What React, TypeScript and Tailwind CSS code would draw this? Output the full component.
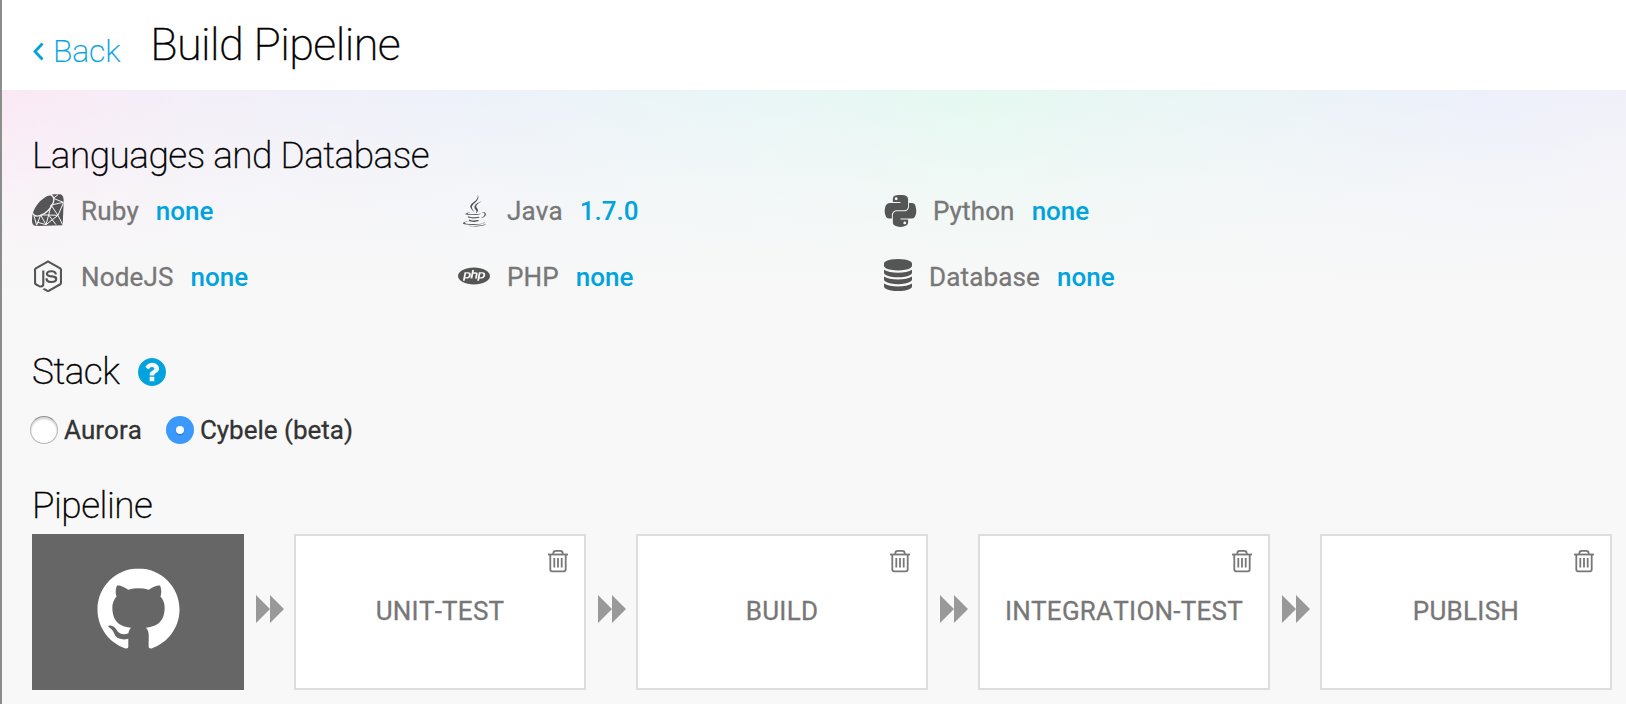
import type { ReactNode } from 'react';
import { DiJava, DiPython, DiNodejsSmall, DiGithubBadge } from 'react-icons/di';
import { SiPhp } from 'react-icons/si';

function RubyIcon() {
  return (
    <svg width="32" height="32" viewBox="0 0 96 96">
      <path fill="#555555" d="M1 62Q6 42 24 22Q44 3 66 1L86 1Q96 5 95 24L92 94L12 96Q0 94 0 80Z" />
      <g fill="none" stroke="#f5f3f6" strokeWidth="3" strokeLinejoin="round">
        <ellipse cx="33" cy="34" rx="40" ry="22" transform="rotate(-45 33 34)" strokeWidth="4" />
        <path d="M64 13L94 25L57 33M64 13L78 2" />
        <path d="M57 33L50 63L26 63L14 94L6 66" />
        <path d="M57 33L78 64L94 27M78 64L50 63L42 92L26 63M78 64L42 92M78 64L92 92M50 63L72 92M42 92L14 84" />
      </g>
    </svg>
  );
}

function DatabaseIcon() {
  return (
    <svg width="28" height="32" viewBox="0 0 1536 1792" preserveAspectRatio="none" fill="currentColor">
      <path d="M768 768q237 0 443-43t325-127v170q0 69-103 128t-280 93.500-385 34.500-385-34.500-280-93.500-103-128v-170q119 84 325 127t443 43zm0 768q237 0 443-43t325-127v170q0 69-103 128t-280 93.500-385 34.500-385-34.500-280-93.500-103-128v-170q119 84 325 127t443 43zm0-384q237 0 443-43t325-127v170q0 69-103 128t-280 93.500-385 34.500-385-34.500-280-93.500-103-128v-170q119 84 325 127t443 43zm0-1152q208 0 385 34.500t280 93.500 103 128v128q0 69-103 128t-280 93.500-385 34.500-385-34.500-280-93.500-103-128v-128q0-69 103-128t280-93.500 385-34.500z" />
    </svg>
  );
}

function HelpIcon() {
  return (
    <svg width="28" height="28" viewBox="128 128 1536 1536" fill="currentColor">
      <path d="M1024 1376v-192q0-14-9-23t-23-9h-192q-14 0-23 9t-9 23v192q0 14 9 23t23 9h192q14 0 23-9t9-23zm256-672q0-88-55.500-163t-138.500-116-170-41q-243 0-371 213-15 24 8 42l132 100q7 6 19 6 16 0 25-12 53-68 86-92 34-24 86-24 48 0 85.500 26t37.500 59q0 38-20 61t-68 45q-63 28-115.500 86.500t-52.500 125.500v36q0 14 9 23t23 9h192q14 0 23-9t9-23q0-19 21.500-49.500t54.500-49.500q32-18 49-28.500t46-35 44.500-48 28-60.500 12.500-81zm384 192q0 209-103 385.500t-279.500 279.500-385.500 103-385.500-103-279.500-279.500-103-385.500 103-385.500 279.500-279.500 385.500-103 385.500 103 279.500 279.500 103 385.500z" />
    </svg>
  );
}

function TrashIcon() {
  return (
    <svg width="22" height="24" viewBox="0 0 22 24" fill="none" stroke="currentColor" strokeWidth="1.800">
      <path d="M1 5.500H21" />
      <path d="M6.300 5.500V4.300Q6.300 1.800 8.800 1.800H13.200Q15.700 1.800 15.700 4.300V5.500" />
      <path d="M3.300 5.500V20.500Q3.300 22.400 5.200 22.400H16.800Q18.700 22.400 18.700 20.500V5.500" />
      <path d="M7.300 9V18.500M11 9V18.500M14.700 9V18.500" />
    </svg>
  );
}

function Arrows() {
  return (
    <div className="flex w-[50px] shrink-0 items-center pb-[7px] pl-[12px]">
      <svg width="28" height="28" viewBox="0 0 28 28" fill="#999999">
        <path d="M0 0L14 14L0 28ZM14 0L28 14L14 28Z" />
      </svg>
    </div>
  );
}

function Language({ icon, name, value }: { icon: ReactNode; name: string; value: string }) {
  return (
    <div className="flex h-[66px] items-center text-[26px] leading-[30px] [font-kerning:none]">
      <div className="flex h-[32px] shrink-0 items-center justify-center text-[#555555]">{icon}</div>
      <span className="pl-[17px] tracking-[0.150px] text-[#777777] [-webkit-text-stroke:0.3px_#777777]">{name}</span>
      <span className="pl-[17px] font-medium text-[#00a3dd]">{value}</span>
    </div>
  );
}

function Box({ children }: { children: ReactNode }) {
  return <span className="flex w-[32px] items-center justify-center pb-[2px] [&>svg]:shrink-0">{children}</span>;
}

function Heading({ children }: { children: ReactNode }) {
  return <h2 className="text-[37px] font-extralight leading-[44px] tracking-[-0.500px] text-black [-webkit-text-stroke:0.35px_#000]">{children}</h2>;
}

function Stage({ name }: { name: string }) {
  return (
    <div className="relative flex h-[156px] w-[292px] shrink-0 items-center justify-center border-2 border-[#dddddd] bg-white text-[26px] tracking-[0.250px] text-[#777777] [-webkit-text-stroke:0.3px_#777777] [font-kerning:none]">
      <span className="pb-[2px]">{name}</span>
      <button className="absolute right-[15px] top-[13px] text-[#777777]">
        <TrashIcon />
      </button>
    </div>
  );
}

const stages = ['UNIT-TEST', 'BUILD', 'INTEGRATION-TEST', 'PUBLISH'];

export default function App() {
  return (
    <div className="h-[704px] w-[1626px] overflow-hidden border-l-2 border-[#8c8c8c] bg-[#f8f8f8] font-[Roboto,sans-serif]">
      <header className="flex h-[90px] items-start bg-white pl-[31px]">
        <a className="mt-[31px] flex items-center text-[32px] font-extralight leading-[40px] tracking-[-0.200px] text-[#00a3dd] [-webkit-text-stroke:0.2px_#00a3dd]">
          <svg className="mr-[9px] mt-[2px]" width="11" height="20" viewBox="0 0 11 20" fill="none" stroke="currentColor" strokeWidth="2.800">
            <path d="M9.500 1.500L2 9.500L9.500 17.500" />
          </svg>
          Back
        </a>
        <h1 className="mt-[18px] pl-[30px] text-[45px] font-extralight leading-[54px] tracking-[-0.600px] text-black [-webkit-text-stroke:0.35px_#000]">Build Pipeline</h1>
      </header>
      <main className="h-[614px] bg-[linear-gradient(to_bottom,rgba(248,248,248,0.1),rgba(248,248,248,0.6)_90px,#f8f8f8_200px),linear-gradient(to_right,#fbe6f5_0px,#f3edf8_180px,#ecf0fa_440px,#e8f5f7_720px,#e2f9f0_980px,#e9f4f6_1220px,#ebeffb_1480px,#f0effa_1626px)] pl-[30px] pt-[44px]">
        <Heading>Languages and Database</Heading>
        <div className="grid grid-cols-[426px_426px_426px]">
          <Language icon={<Box><RubyIcon /></Box>} name="Ruby" value="none" />
          <Language icon={<Box><DiJava size={39} /></Box>} name="Java" value="1.7.0" />
          <Language icon={<Box><DiPython size={45} /></Box>} name="Python" value="none" />
          <Language icon={<Box><DiNodejsSmall size={40} /></Box>} name="NodeJS" value="none" />
          <Language icon={<Box><SiPhp size={32} /></Box>} name="PHP" value="none" />
          <Language icon={<span className="pb-[4px]"><DatabaseIcon /></span>} name="Database" value="none" />
        </div>
        <div className="mt-[40px] flex items-center">
          <Heading>Stack</Heading>
          <span className="pl-[19px] text-[#00a3dd]">
            <HelpIcon />
          </span>
        </div>
        <div className="-ml-[2px] mt-[20px] flex h-[32px] items-center text-[26px] text-[#333333] [-webkit-text-stroke:0.3px_#333333] [font-kerning:none]">
          <span className="size-[28px] rounded-full border border-[#b4b4b4] border-t-[#8f8f8f] bg-white shadow-[inset_0_2px_2px_rgba(0,0,0,0.18)]" />
          <span className="pl-[6px]">Aurora</span>
          <span className="ml-[24px] flex size-[28px] items-center justify-center rounded-full bg-[#3b99fc]">
            <span className="size-[8px] rounded-full bg-white shadow-[0_1px_1px_rgba(0,0,0,0.3)]" />
          </span>
          <span className="pl-[6px]">Cybele (beta)</span>
        </div>
        <div className="mt-[38px]">
          <Heading>Pipeline</Heading>
        </div>
        <div className="mt-[6px] flex">
          <div className="flex h-[156px] w-[212px] shrink-0 items-center justify-center bg-[#666666] pb-[10px] text-white">
            <DiGithubBadge size={117} />
          </div>
          {stages.map((s) => (
            <div key={s} className="flex">
              <Arrows />
              <Stage name={s} />
            </div>
          ))}
        </div>
      </main>
    </div>
  );
}
